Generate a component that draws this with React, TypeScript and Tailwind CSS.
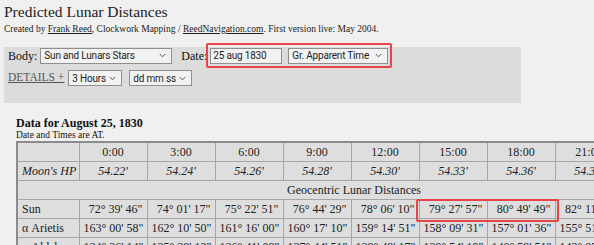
const hours = ["0:00", "3:00", "6:00", "9:00", "12:00", "15:00", "18:00", "21:00", "24:00"];
const hp = ["54.22'", "54.24'", "54.26'", "54.28'", "54.30'", "54.33'", "54.36'", "54.39'", "54.42'"];

const rows = [
  {
    name: "Sun",
    values: [`72° 39' 46"`, `74° 01' 17"`, `75° 22' 51"`, `76° 44' 29"`, `78° 06' 10"`, `79° 27' 57"`, `80° 49' 49"`, `82° 11' 45"`, `83° 33' 46"`],
  },
  {
    name: "α Arietis",
    values: [`163° 00' 58"`, `162° 10' 50"`, `161° 16' 00"`, `160° 17' 10"`, `159° 14' 51"`, `158° 09' 31"`, `157° 01' 36"`, `155° 51' 31"`, `154° 39' 39"`],
  },
  {
    name: "α Aldebaran",
    values: [`134° 36' 14"`, `135° 38' 12"`, `136° 41' 08"`, `137° 44' 51"`, `138° 49' 17"`, `139° 54' 19"`, `140° 59' 51"`, `142° 05' 49"`, `143° 12' 08"`],
  },
];

const Select = ({ label, className }: { label: string; className: string }) => (
  <div
    className={`flex items-center justify-between h-[16px] border border-[#8f8f8f] bg-[#f2f2f2] pl-[3px] pr-[5px] whitespace-nowrap font-['Roboto','Liberation_Sans',sans-serif] text-[10px] tracking-[-0.2px] text-[#222] ${className}`}
  >
    <span>{label}</span>
    <svg width="7" height="5" viewBox="0 0 7 5" className="shrink-0">
      <path d="M0.8 1 L3.5 3.8 L6.2 1" fill="none" stroke="#555" strokeWidth="1" />
    </svg>
  </div>
);

const cell = "border border-[#a6a6a6] h-[19px] px-[4px] whitespace-nowrap overflow-hidden";

export default function App() {
  return (
    <div className="w-[594px] h-[245px] overflow-hidden bg-[#f0f0f0] font-['Liberation_Serif','Times_New_Roman',serif] text-[#111]">
      <div className="pl-[4px] pt-[2px]">
        <h1 className="text-[15.5px] leading-[19px] text-[#222]">Predicted Lunar Distances</h1>
        <p className="mt-[2px] text-[9.5px] leading-[12px] text-[#222]">
          Created by <span className="underline">Frank Reed</span>, Clockwork Mapping /{" "}
          <span className="underline">ReedNavigation.com</span>. First version live: May 2004.
        </p>
      </div>

      <div className="mt-[12px] ml-[4px] w-[517px] h-[56px] bg-[#dcdcdc] pl-[4px] text-[12px]">
        <div className="flex items-center h-[17px]">
          <span>Body:</span>
          <Select label="Sun and Lunars Stars" className="ml-[3px] w-[132px]" />
          <span className="ml-[9px]">Date:</span>
          <div className="ml-[-1px] flex items-center shrink-0 gap-[6px] h-[25px] w-[186px] border-2 border-[#e8424a] rounded-[2px] pl-[2px]">
            <div className="h-[16px] w-[72px] border border-[#8f8f8f] bg-[#f2f2f2] pl-[2px] whitespace-nowrap font-['Roboto','Liberation_Sans',sans-serif] text-[10px] tracking-[-0.2px] leading-[14px] text-[#222]">
              25 aug 1830
            </div>
            <Select label="Gr. Apparent Time" className="w-[100px]" />
          </div>
        </div>
        <div className="flex items-center h-[16px] mt-[6px]">
          <span className="underline text-[11.5px] text-[#555]">DETAILS +</span>
          <Select label="3 Hours" className="ml-[4px] w-[54px]" />
          <Select label="dd mm ss" className="ml-[7px] w-[63px]" />
        </div>
      </div>

      <div className="pl-[16px] pt-[13px]">
        <h2 className="font-bold text-[12px] leading-[14px]">Data for August 25, 1830</h2>
        <p className="text-[9.5px] leading-[10px] mb-[1px]">Date and Times are AT.</p>
        <table className="table-fixed w-[674px] border-collapse border-2 border-[#8c8c8c] bg-[#dedede] text-[12px] text-[#222]">
          <colgroup>
            <col className="w-[62px]" />
            {hours.map((h) => (
              <col key={h} className="w-[68px]" />
            ))}
          </colgroup>
          <tbody>
            <tr>
              <td className={cell}></td>
              {hours.map((h) => (
                <td key={h} className={`${cell} text-center`}>
                  {h}
                </td>
              ))}
            </tr>
            <tr>
              <td className={`${cell} italic`}>Moon's HP</td>
              {hp.map((v, i) => (
                <td key={i} className={`${cell} text-center italic`}>
                  {v}
                </td>
              ))}
            </tr>
            <tr>
              <td className={`${cell} text-center`} colSpan={10}>
                Geocentric Lunar Distances
              </td>
            </tr>
            {rows.map((r, ri) => (
              <tr key={r.name}>
                <td className={cell}>{r.name}</td>
                {r.values.map((v, i) => (
                  <td key={i} className={`${cell} text-right ${ri === 0 && i === 5 ? "relative overflow-visible" : ""}`}>
                    {ri === 0 && i === 5 && (
                      <div className="absolute left-[-4px] top-[-1px] w-[143px] h-[23px] border-2 border-[#e8424a] rounded-[2px] pointer-events-none" />
                    )}
                    {v}
                  </td>
                ))}
              </tr>
            ))}
          </tbody>
        </table>
      </div>
    </div>
  );
}
